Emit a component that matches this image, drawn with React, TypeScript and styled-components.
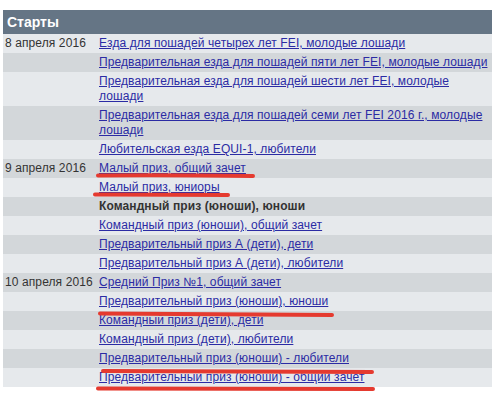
import React from "react";
import styled, { createGlobalStyle } from "styled-components";

type Start = { date?: string; title: string; link?: boolean };

const starts: Start[] = [
  { date: "8 апреля 2016", title: "Езда для пошадей четырех лет FEI, молодые лошади" },
  { title: "Предварительная езда для пошадей пяти лет FEI, молодые лошади" },
  { title: "Предварительная езда для пошадей шести лет FEI, молодые лошади" },
  { title: "Предварительная езда для пошадей семи лет FEI 2016 г., молодые лошади" },
  { title: "Любительская езда EQUI-1, любители" },
  { date: "9 апреля 2016", title: "Малый приз, общий зачет" },
  { title: "Малый приз, юниоры" },
  { title: "Командный приз (юноши), юноши", link: false },
  { title: "Командный приз (юноши), общий зачет" },
  { title: "Предварительный приз А (дети), дети" },
  { title: "Предварительный приз А (дети), любители" },
  { date: "10 апреля 2016", title: "Средний Приз №1, общий зачет" },
  { title: "Предварительный приз (юноши), юноши" },
  { title: "Командный приз (дети), дети" },
  { title: "Командный приз (дети), любители" },
  { title: "Предварительный приз (юноши) - любители" },
  { title: "Предварительный приз (юноши) - общий зачет" },
];

// hand-drawn red marks over the list
const marks = [
  "M98 175.5 Q175 175 253 176",
  "M95 194.5 Q160 195 228 195",
  "M100 313.5 Q215 314 332 315",
  "M103 371 Q240 372 372 372",
  "M98 388.5 Q235 389 373 389",
];

const GlobalStyle = createGlobalStyle`
  html, body {
    margin: 0;
    background: #fff;
  }
  body {
    font-family: "Liberation Sans", Arial, sans-serif;
  }
`;

const Page = styled.div`
  position: relative;
  width: 494px;
  height: 397px;
  padding: 10px 0 0 3px;
  box-sizing: border-box;
  overflow: hidden;
`;

const Table = styled.table`
  width: 489px;
  border-collapse: collapse;
  table-layout: fixed;
  font-size: 12px;
  letter-spacing: 0.1px;
  line-height: 15px;
  color: #333;
`;

const HeadCell = styled.th`
  height: 24px;
  padding: 0 4px;
  background: #657585;
  color: #fff;
  font-size: 14px;
  font-weight: bold;
  letter-spacing: 0;
  text-align: left;
  vertical-align: middle;
`;

const Row = styled.tr<{ $odd: boolean }>`
  background: ${(p) => (p.$odd ? "#d3d7da" : "#e6e9ec")};
`;

const DateCell = styled.td`
  padding: 2px;
  vertical-align: top;
  white-space: nowrap;
`;

const TitleCell = styled.td`
  padding: 2px;
  vertical-align: top;
`;

const Link = styled.a`
  color: #2b2ba4;
  text-decoration: underline;
`;

const Plain = styled.b`
  color: #333;
`;

const Marks = styled.svg`
  position: absolute;
  left: 0;
  top: 0;
  pointer-events: none;
`;

export default function App() {
  return (
    <Page>
      <GlobalStyle />
      <Table>
        <colgroup>
          <col style={{ width: 94 }} />
          <col />
        </colgroup>
        <thead>
          <tr>
            <HeadCell colSpan={2}>Старты</HeadCell>
          </tr>
        </thead>
        <tbody>
          {starts.map((s, i) => (
            <Row key={i} $odd={i % 2 === 1}>
              <DateCell>{s.date ?? ""}</DateCell>
              <TitleCell>
                {s.link === false ? (
                  <Plain>{s.title}</Plain>
                ) : (
                  <Link href="#">{s.title}</Link>
                )}
              </TitleCell>
            </Row>
          ))}
        </tbody>
      </Table>
      <Marks width={494} height={397} viewBox="0 0 494 397">
        {marks.map((d, i) => (
          <path
            key={i}
            d={d}
            fill="none"
            stroke="#e53a2f"
            strokeWidth={4}
            strokeLinecap="round"
          />
        ))}
      </Marks>
    </Page>
  );
}
